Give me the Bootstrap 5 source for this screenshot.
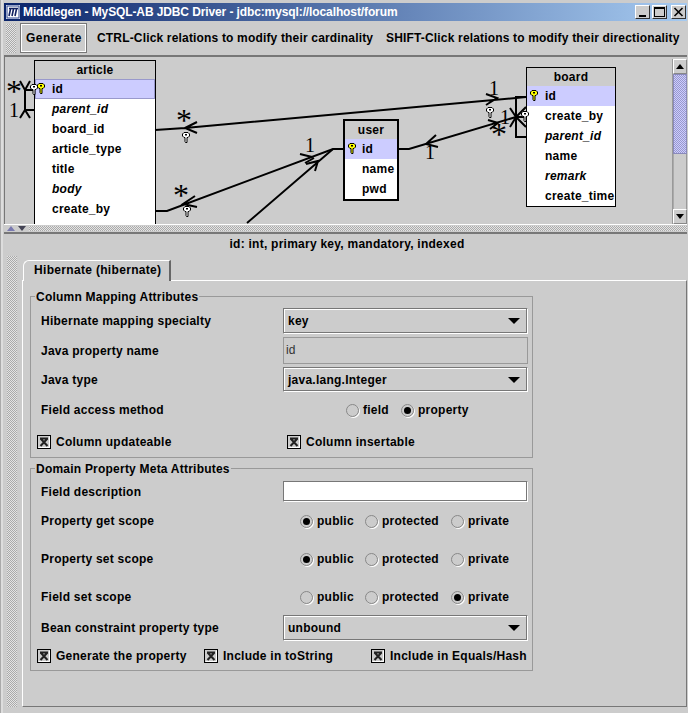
<!DOCTYPE html>
<html lang="en">
<head>
<meta charset="utf-8">
<title>Middlegen</title>
<link href="https://cdn.jsdelivr.net/npm/bootstrap@5.3.0/dist/css/bootstrap.min.css" rel="stylesheet">
<style>
html,body{margin:0;height:713px;overflow:hidden;background:#ccc}
body{font:700 12px/16px "Liberation Sans",Arial,sans-serif;letter-spacing:.25px;color:#000}
.win{width:688px;height:713px;padding:3px 1px 0 4px;background:#ccc;box-shadow:inset 1px 0 #aaa,inset 3px 0 #ddd}
.ttl{height:18px;padding:0 1px 0 2px;background:linear-gradient(90deg,#0a246a,#a6caf0);color:#fff;font-size:12px;font-weight:700;letter-spacing:-.11px}
.ttl-ic{margin-right:3px}
.wbtn{width:15px;height:14px;background:#ccc;border:1px solid;border-color:#fff #333 #333 #fff;margin-left:2px;display:flex}
.tbar{height:36px;border-bottom:2px solid #777;white-space:nowrap}
.bumps{background:conic-gradient(#aaa 25%,#e4e4e4 0 50%,#aaa 0 75%,#e4e4e4 0) 0 0/2px 2px}
.tgrip{width:10px;height:29px;margin:0 4px 0 2px;flex:none}
.gen{width:67px;height:30px;flex:none;border:1px solid #777;box-shadow:inset -1px -1px #fff;outline:1px solid #fff;outline-offset:-2px;background:#ccc;margin-right:10px;font:inherit;letter-spacing:.5px;padding:0 0 0 1px;color:#000}
.hint1{width:289px;letter-spacing:.17px;flex:none}
.hint2{letter-spacing:.17px;flex:none}
.canvas{height:167px;position:relative;overflow:hidden;background:#ccc;border-left:1px solid #777}
.wires{position:absolute;left:0;top:0;width:683px;height:167px;z-index:2}
.wires .ln{fill:none;stroke:#000;stroke-width:2}
.wires .stx{font:400 32px "Liberation Serif",serif;letter-spacing:0;text-anchor:middle}
.wires .onx{font:400 20px "Liberation Serif",serif;letter-spacing:0;text-anchor:middle}
.enode{position:absolute;background:#fff;border:1px solid #000;z-index:1}
.enode.thick{border-width:2px}
.ehead{height:18px;background:#ccc;text-align:center;line-height:18px}
.erow{height:20px;line-height:21px;padding-left:17px;white-space:nowrap}
.erow.sel{background:#ccf}
.erow.bordered{box-shadow:inset 0 0 0 1px #99c}
.erow i{font-style:italic}
.n1{left:29px;top:3px;width:122px;height:180px}
.n2{left:338px;top:62px;width:56px;height:82px}
.n3{left:521px;top:10px;width:90px;height:140px}
.n3 .erow{padding-left:18px}
.vbar{position:absolute;right:0;top:2px;width:15px;height:165px;border-left:1px solid #999;background:#ccc;z-index:3;display:flex;flex-direction:column}
.sbtn{height:15px;flex:none;background:#ccc;border:1px solid;border-color:#fff #888 #888 #fff;display:flex;align-items:center;justify-content:center}
.thumb{height:80px;flex:none;background:conic-gradient(#9999cc 25%,#ccf 0 50%,#9999cc 0 75%,#ccf 0) 0 0/2px 2px;border:1px solid #8a8abb}
.strack{flex:1;background:#ccc;border-left:1px solid #aaa;border-right:1px solid #999}
.split{height:10px;border-top:1px solid #fff;border-bottom:2px solid #777;padding-left:3px;gap:3px}
.up{border:4.5px solid transparent;border-top:0;border-bottom:5px solid #7a7ab0}
.dn{border:4.5px solid transparent;border-bottom:0;border-top:5px solid #445}
.upk{border-bottom-color:#000}
.dnk{border-top-color:#000}
.sstrip{height:5px;flex:1}
.pnl{height:475px}
.phead{height:25px;line-height:18px;text-align:center;padding-left:3px;padding-top:1px}
.pgrip{width:10px;height:451px;margin:-3px 3px 0 3px;flex:none}
.tabs{flex:1;padding-left:2px}
.tabx{width:148px;height:21px;margin-left:1px;padding:1px 0 0 10px;border-top:1px solid #fff;border-left:1px solid #fff;border-right:2px solid #666;border-top-left-radius:6px;line-height:17px;position:relative;top:1px;background:#ccc;letter-spacing:.32px}
.pane{height:427px;width:665px;border:1px solid;border-color:#fff #777 #777 #fff;padding:15px 0 0 7px}
.fset{width:503px;position:relative;border:1px solid #999;padding:12px 4px 0 0}
.fset+.fset{margin-top:10px;height:203px}
.fset.f1{height:162px;padding-top:11px}
.legendx{position:absolute;left:4px;top:-8px;background:#ccc;padding:0 1px;line-height:16px;white-space:nowrap;letter-spacing:.22px}
.fl{width:252px;padding-left:10px;flex:none;white-space:nowrap}
.combo{width:245px;height:26px;border:1px solid;border-color:#777 #fff #fff #777;padding:0 5px 0 4px;box-shadow:inset -1px -1px #777,inset 1px 1px #fff}
.combo.h25{height:25px}
.tri{border:6px solid transparent;border-bottom:0;border-top:6px solid #000;width:0;height:0;margin-right:2px}
.trow{padding-top:3px}
.tinput{width:245px;height:27px;border:1px solid #999;padding-left:2px;font-weight:400;color:#333;line-height:24px;letter-spacing:0}
.dinput{width:245px;height:21px;background:#fff;border:1px solid;border-color:#777 #fff #fff #777;box-shadow:inset 0 -1px #777,inset -1px 0 #777}
.rad{width:13px;height:13px;border-radius:50%;border:1px solid #888;box-shadow:1px 1px 0 #fff;flex:none;margin-right:4px;display:flex;align-items:center;justify-content:center}
.rad.on::after{content:"";width:7px;height:7px;border-radius:50%;background:#000}
.rad-cell{display:flex;align-items:center}
.rrow{height:38px;display:flex;align-items:center}
.g3{display:grid;grid-template-columns:65px 86px 1fr;width:245px;padding-left:17px;flex:none}
.g2{display:grid;grid-template-columns:55px 1fr;width:245px;padding-left:63px;flex:none}
.ck{width:14px;height:14px;flex:none;margin-right:5px;display:block}
.crow{display:grid;padding-left:6px}
.c1{grid-template-columns:250px 1fr;height:28px;align-items:center}
.c2{grid-template-columns:167px 167px 1fr;height:29px;align-items:center}
.acc{height:36px}
.mn1{margin-top:-1px}
</style>
</head>
<body>
<svg width="0" height="0" class="position-absolute">
<defs>
<symbol id="kw" viewBox="0 0 8 11"><path d="M2 .5h4l1.5 1.5v2L6 5.5H5V10.5H3.5L3 9.5V5.5H2L.5 4V2z" fill="#fff" stroke="#000"/><rect x="3" y="2" width="2" height="1.5" fill="#000"/></symbol>
<symbol id="ky" viewBox="0 0 8 11"><path d="M2 .5h4l1.5 1.5v2L6 5.5H5V10.5H3.5L3 9.5V5.5H2L.5 4V2z" fill="#ff0" stroke="#000"/><rect x="3" y="2" width="2" height="1.5" fill="#000"/></symbol>
<symbol id="cx" viewBox="0 0 14 14"><rect x=".5" y=".5" width="13" height="13" fill="#ccc" stroke="#000"/><path d="M1.5 12.5h11v-11" fill="none" stroke="#fff"/><path d="M3 3.5h8M3.5 3.5L10.5 11M10.5 3.5L3.5 11" stroke="#222" stroke-width="2" fill="none"/></symbol>
</defs>
</svg>
<div class="win">
  <div class="ttl d-flex align-items-center">
    <svg class="ttl-ic" width="14" height="14" viewBox="0 0 14 14"><rect width="14" height="14" fill="#fff"/><rect x="1" y="1" width="12" height="12" fill="#fff" stroke="#27408b"/><path d="M3 3.5h9M4.5 4L3 11M7.5 4L6 11M10.5 4L9 11" stroke="#102060" stroke-width="1.6" fill="none"/></svg>
    <span class="flex-grow-1">Middlegen - MySQL-AB JDBC Driver - jdbc:mysql://localhost/forum</span>
    <span class="wbtn"><svg width="13" height="12" viewBox="0 0 13 12"><rect x="3" y="9" width="7" height="2"/></svg></span>
    <span class="wbtn"><svg width="13" height="12" viewBox="0 0 13 12"><rect x="1.5" y="1.5" width="10" height="9" fill="none" stroke="#000"/><rect x="1" y="1" width="11" height="2"/></svg></span>
    <span class="wbtn ms-1"><svg width="13" height="12" viewBox="0 0 13 12"><path d="M2.5 2l8 8M10.5 2l-8 8" stroke="#000" stroke-width="1.6"/></svg></span>
  </div>
  <div class="tbar d-flex align-items-center">
    <div class="tgrip bumps"></div>
    <button type="button" class="gen">Generate</button>
    <span class="hint1">CTRL-Click relations to modify their cardinality</span>
    <span class="hint2">SHIFT-Click relations to modify their directionality</span>
  </div>
  <div class="canvas">
    <div class="enode n1">
      <div class="ehead">article</div>
      <div class="erow sel bordered">id</div>
      <div class="erow"><i>parent_id</i></div>
      <div class="erow">board_id</div>
      <div class="erow">article_type</div>
      <div class="erow">title</div>
      <div class="erow"><i>body</i></div>
      <div class="erow">create_by</div>
    </div>
    <div class="enode thick n2">
      <div class="ehead">user</div>
      <div class="erow sel">id</div>
      <div class="erow">name</div>
      <div class="erow">pwd</div>
    </div>
    <div class="enode n3">
      <div class="ehead">board</div>
      <div class="erow sel">id</div>
      <div class="erow">create_by</div>
      <div class="erow"><i>parent_id</i></div>
      <div class="erow">name</div>
      <div class="erow"><i>remark</i></div>
      <div class="erow">create_time</div>
    </div>
    <svg class="wires" viewBox="5 57 683 167">
      <path class="ln" d="M34 90H25V110H34M20 81L25 90L30 81M20 118L25 110L30 118"/>
      <path class="ln" d="M155 130L185 128L516 98L526 97M197 122L185 128L197 133M486 94L497 98L486 105"/>
      <path class="ln" d="M155 211H167L333 149H343M195 196L183 204L197 207M300 154L312 157M305 163L314 158"/>
      <path class="ln" d="M247 223L333 149M306 164L318 161L315 171"/>
      <path class="ln" d="M398 149H409L516 117M436 135L426 144L438 147M488 120L498 123L490 129"/>
      <path class="ln" d="M526 97H516V137H526M516 117L526 107M516 117L526 127M510 108L516 117L510 127M516 117H526"/>
      <text class="stx" x="14" y="102">*</text>
      <text class="onx" x="14" y="117">1</text>
      <text class="stx" x="184" y="131">*</text>
      <text class="stx" x="181" y="206">*</text>
      <text class="onx" x="310" y="152">1</text>
      <text class="onx" x="494" y="95">1</text>
      <text class="onx" x="430" y="159">1</text>
      <text class="stx" x="499" y="145">*</text>
      <text class="onx" x="505" y="124">1</text>
      <use href="#kw" x="30" y="84" width="8" height="11"/>
      <use href="#ky" x="37" y="83" width="8" height="11"/>
      <use href="#kw" x="182" y="132" width="8" height="11"/>
      <use href="#kw" x="183" y="206" width="8" height="11"/>
      <use href="#kw" x="486" y="107" width="8" height="11"/>
      <use href="#kw" x="521" y="111" width="8" height="11"/>
      <use href="#ky" x="348" y="143" width="8" height="11"/>
      <use href="#ky" x="530" y="90" width="8" height="11"/>
    </svg>
    <div class="vbar">
      <div class="sbtn"><span class="up upk"></span></div>
      <div class="thumb"></div>
      <div class="strack"></div>
      <div class="sbtn"><span class="dn dnk"></span></div>
    </div>
  </div>
  <div class="split d-flex align-items-center">
    <span class="up"></span><span class="dn"></span>
    <span class="sstrip bumps"></span>
  </div>
  <div class="pnl">
    <div class="phead">id: int, primary key, mandatory, indexed</div>
    <div class="d-flex">
      <div class="pgrip bumps"></div>
      <div class="tabs">
        <div class="tabx">Hibernate (hibernate)</div>
        <div class="pane">
          <div class="fset f1">
            <div class="legendx">Column Mapping Attributes</div>
            <div class="d-flex align-items-center">
              <div class="fl">Hibernate mapping specialty</div>
              <div class="combo d-flex align-items-center justify-content-between"><span>key</span><span class="tri"></span></div>
            </div>
            <div class="d-flex align-items-center trow">
              <div class="fl">Java property name</div>
              <div class="tinput">id</div>
            </div>
            <div class="d-flex align-items-center trow">
              <div class="fl">Java type</div>
              <div class="combo h25 d-flex align-items-center justify-content-between"><span>java.lang.Integer</span><span class="tri"></span></div>
            </div>
            <div class="d-flex align-items-center acc">
              <div class="fl">Field access method</div>
              <div class="g2">
                <span class="rad-cell"><span class="rad"></span>field</span>
                <span class="rad-cell"><span class="rad on"></span>property</span>
              </div>
            </div>
            <div class="crow c1">
              <span class="rad-cell"><svg class="ck"><use href="#cx"/></svg>Column updateable</span>
              <span class="rad-cell"><svg class="ck"><use href="#cx"/></svg>Column insertable</span>
            </div>
          </div>
          <div class="fset">
            <div class="legendx">Domain Property Meta Attributes</div>
            <div class="d-flex align-items-center">
              <div class="fl">Field description</div>
              <div class="dinput"></div>
            </div>
            <div class="rrow">
              <div class="fl">Property get scope</div>
              <div class="g3">
                <span class="rad-cell"><span class="rad on"></span>public</span>
                <span class="rad-cell"><span class="rad"></span>protected</span>
                <span class="rad-cell"><span class="rad"></span>private</span>
              </div>
            </div>
            <div class="rrow">
              <div class="fl">Property set scope</div>
              <div class="g3">
                <span class="rad-cell"><span class="rad on"></span>public</span>
                <span class="rad-cell"><span class="rad"></span>protected</span>
                <span class="rad-cell"><span class="rad"></span>private</span>
              </div>
            </div>
            <div class="rrow">
              <div class="fl">Field set scope</div>
              <div class="g3">
                <span class="rad-cell"><span class="rad"></span>public</span>
                <span class="rad-cell"><span class="rad"></span>protected</span>
                <span class="rad-cell"><span class="rad on"></span>private</span>
              </div>
            </div>
            <div class="d-flex align-items-center mn1">
              <div class="fl">Bean constraint property type</div>
              <div class="combo d-flex align-items-center justify-content-between"><span>unbound</span><span class="tri"></span></div>
            </div>
            <div class="crow c2">
              <span class="rad-cell"><svg class="ck"><use href="#cx"/></svg>Generate the property</span>
              <span class="rad-cell"><svg class="ck"><use href="#cx"/></svg>Include in toString</span>
              <span class="rad-cell"><svg class="ck"><use href="#cx"/></svg>Include in Equals/Hash</span>
            </div>
          </div>
        </div>
      </div>
    </div>
  </div>
</div>
</body>
</html>
